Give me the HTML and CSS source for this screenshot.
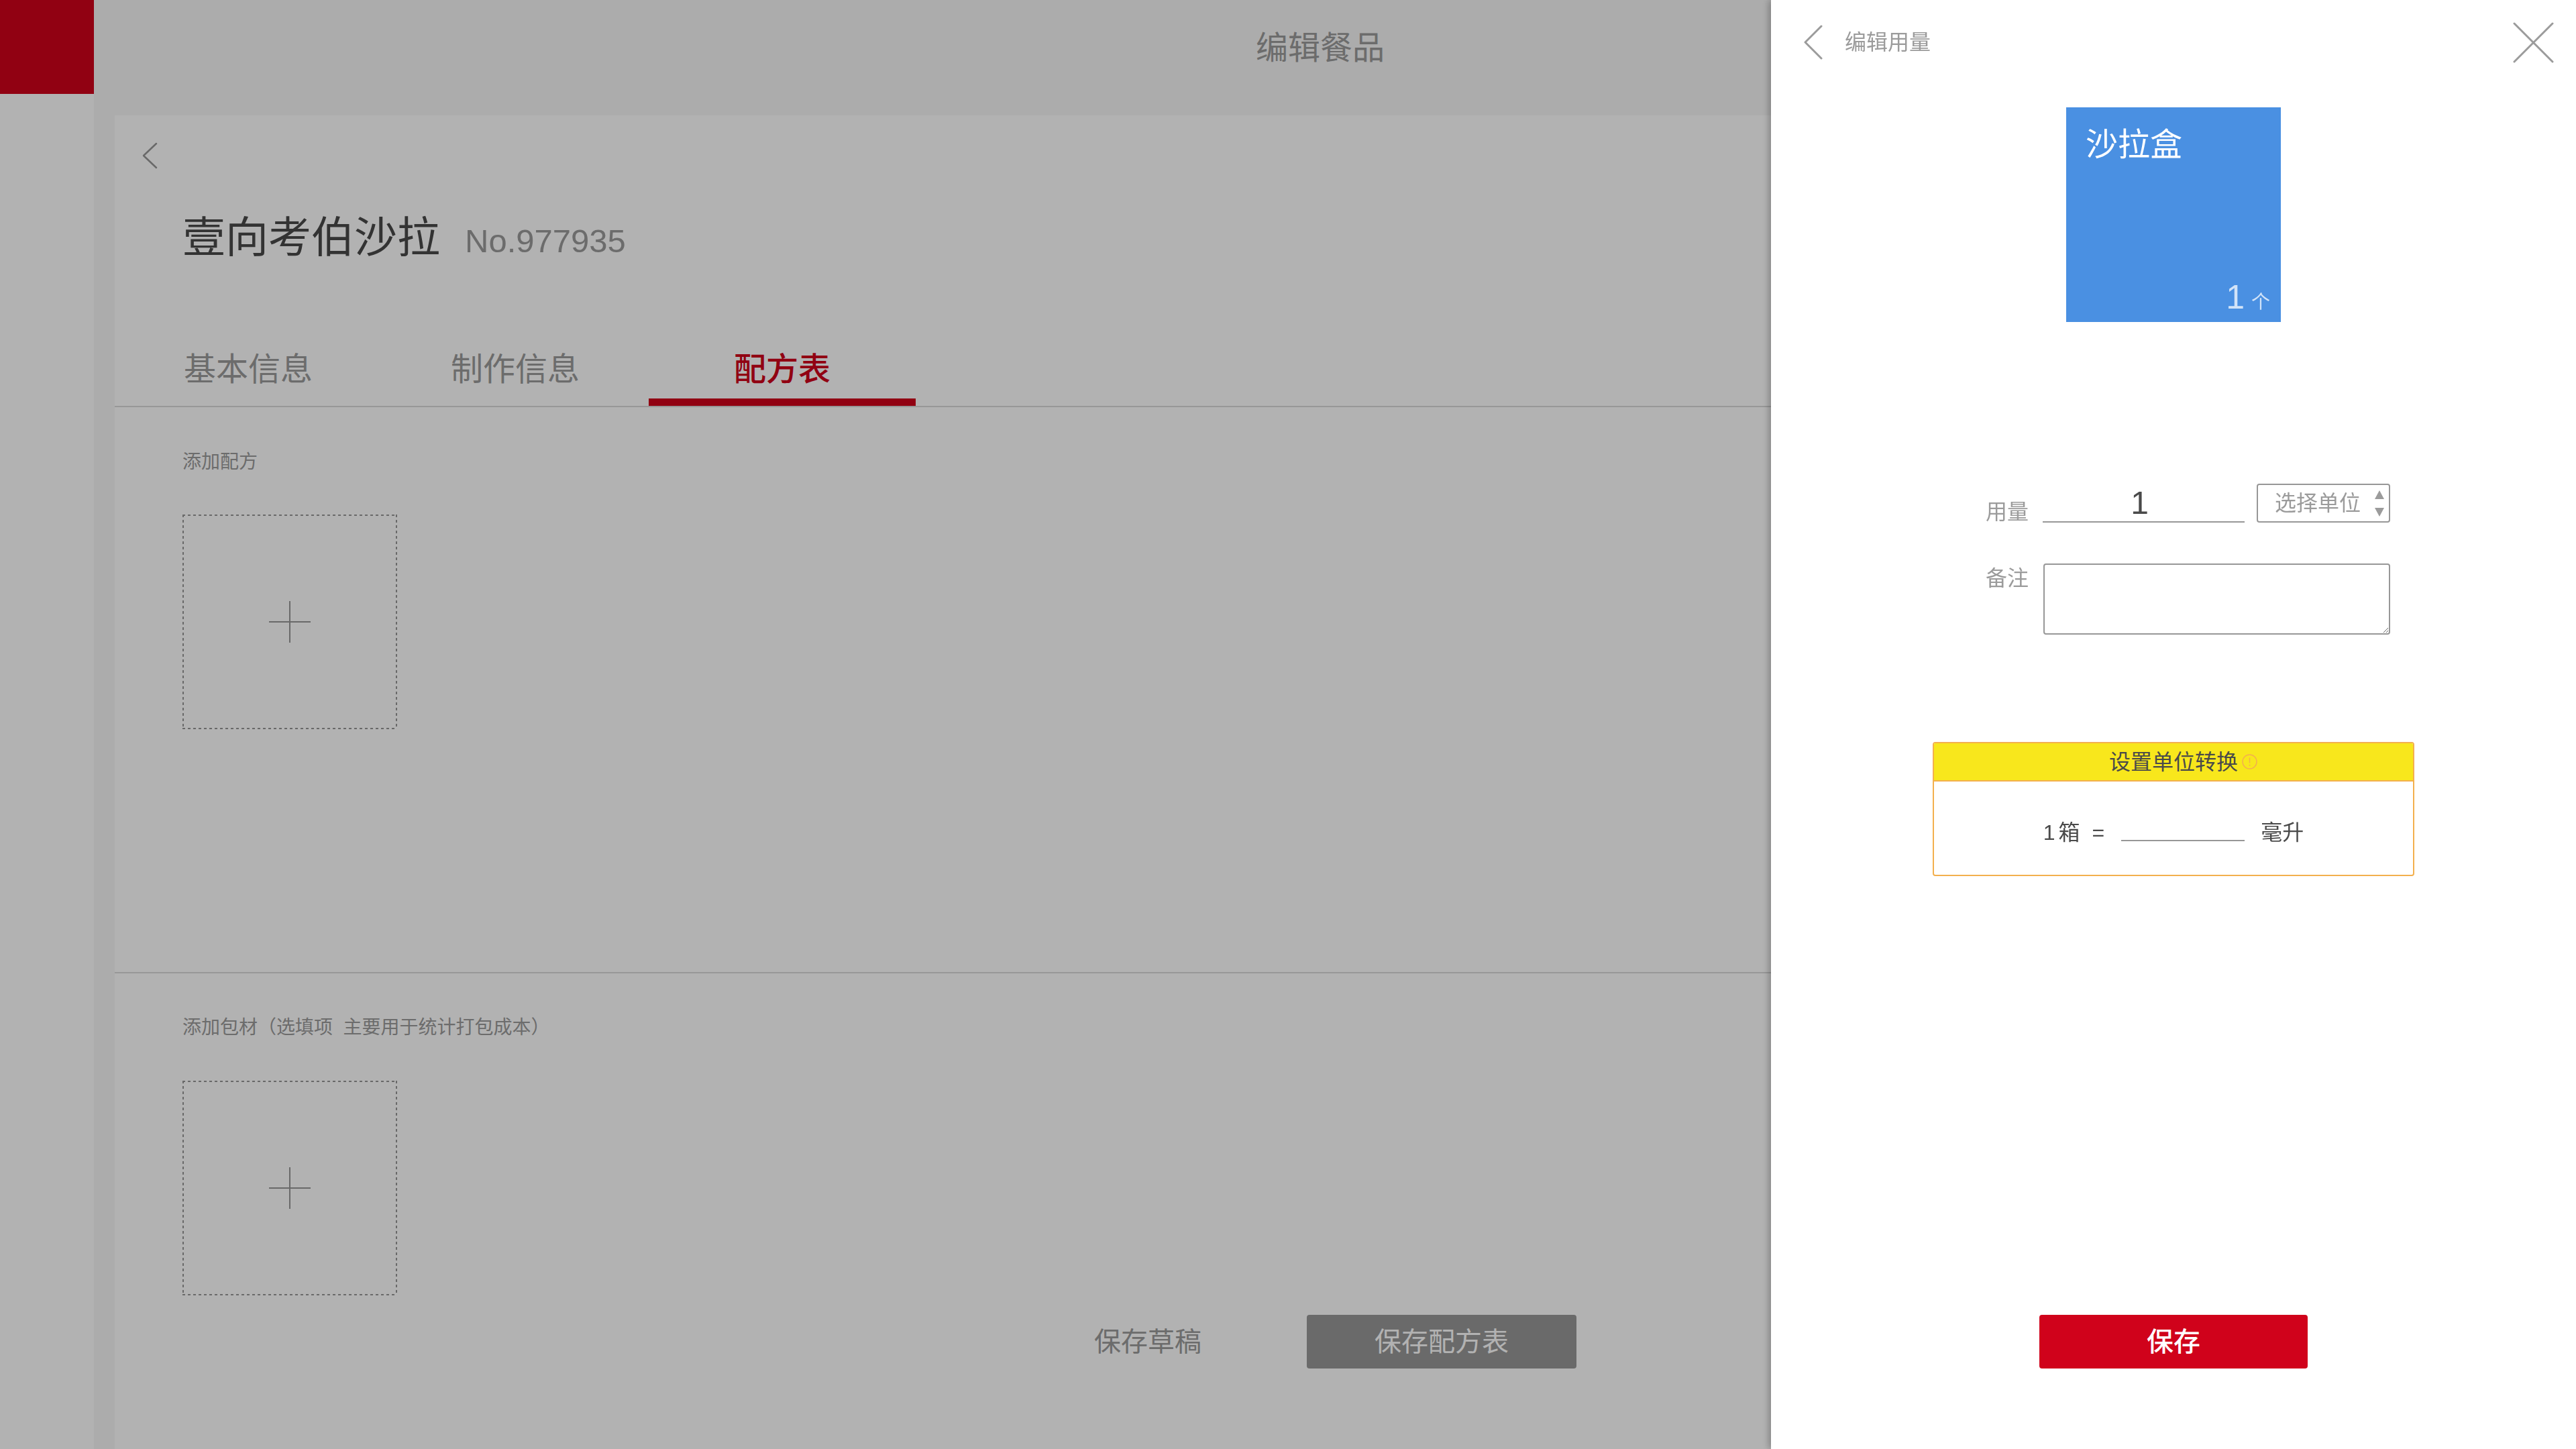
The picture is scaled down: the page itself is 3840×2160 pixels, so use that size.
FILE: index.html
```html
<!DOCTYPE html>
<html lang="zh-CN">
<head>
<meta charset="utf-8">
<title>编辑餐品</title>
<link rel="stylesheet" href="styles.css">
</head>
<body>
<div class="app">
  <aside class="sidebar"><div class="logo"></div></aside>
  <main class="main">
    <header class="topbar"><h1>编辑餐品</h1></header>
    <section class="card">
      <button class="back" aria-label="返回">
        <svg width="24" height="40" viewBox="0 0 24 40"><path d="M22 2 L3 20 L22 38" fill="none" stroke="#979797" stroke-width="2.5" stroke-linecap="round" stroke-linejoin="round"/></svg>
      </button>
      <div class="title-row">
        <h2>壹向考伯沙拉</h2>
        <span class="code">No.977935</span>
      </div>
      <nav class="tabs">
        <div class="tab">基本信息</div>
        <div class="tab">制作信息</div>
        <div class="tab active">配方表</div>
      </nav>
      <div class="section recipe">
        <div class="section-label">添加配方</div>
        <div class="add-box">
          <svg width="62" height="62" viewBox="0 0 62 62"><path d="M31 0 V62 M0 31 H62" stroke="#979797" stroke-width="2" fill="none"/></svg>
        </div>
      </div>
      <div class="section pack">
        <div class="section-label">添加包材（选填项  主要用于统计打包成本）</div>
        <div class="add-box">
          <svg width="62" height="62" viewBox="0 0 62 62"><path d="M31 0 V62 M0 31 H62" stroke="#979797" stroke-width="2" fill="none"/></svg>
        </div>
      </div>
      <div class="actions">
        <button class="draft">保存草稿</button>
        <button class="save-recipe">保存配方表</button>
      </div>
    </section>
  </main>
</div>

<div class="mask"></div>

<aside class="drawer">
  <div class="drawer-head">
    <button class="drawer-back" aria-label="返回">
      <svg width="29" height="52" viewBox="0 0 29 52"><path d="M27 2 L3 26 L27 50" fill="none" stroke="#9b9b9b" stroke-width="3" stroke-linecap="round" stroke-linejoin="round"/></svg>
    </button>
    <span class="drawer-title">编辑用量</span>
    <button class="drawer-close" aria-label="关闭">
      <svg width="61" height="61" viewBox="0 0 61 61"><path d="M2 2 L59 59 M59 2 L2 59" fill="none" stroke="#9b9b9b" stroke-width="3" stroke-linecap="round"/></svg>
    </button>
  </div>

  <div class="item-card">
    <div class="item-name">沙拉盒</div>
    <div class="item-count">1<small>个</small></div>
  </div>

  <div class="form">
    <div class="form-row">
      <span class="form-label">用量</span>
      <input class="qty-input" type="text" value="1">
      <div class="unit-select">
        <span>选择单位</span>
        <svg width="14" height="39" viewBox="0 0 14 39"><path d="M0 13 L7 0 L14 13 Z M0 26 L14 26 L7 39 Z" fill="#9b9b9b"/></svg>
      </div>
    </div>
    <div class="form-row top">
      <span class="form-label">备注</span>
      <textarea class="note"></textarea>
    </div>
  </div>

  <div class="convert">
    <div class="convert-head">
      <span>设置单位转换</span>
      <svg class="info-icon" width="23" height="23" viewBox="0 0 23 23"><circle cx="11.5" cy="11.5" r="10.5" fill="none" stroke="#f3b04e" stroke-width="1.5"/><path d="M11.5 5.5 V13.5" stroke="#f3b04e" stroke-width="1.5"/><circle cx="11.5" cy="16.8" r="1" fill="#f3b04e"/></svg>
    </div>
    <div class="convert-body">
      <span class="conv-from"><span class="num">1</span>箱</span>
      <span class="eq">=</span>
      <span class="blank"></span>
      <span class="conv-to">毫升</span>
    </div>
  </div>

  <button class="drawer-save">保存</button>
</aside>
</body>
</html>
```

FILE: styles.css
```css
html, body {
  margin: 0;
  padding: 0;
}

body {
  width: 3840px;
  height: 2160px;
  overflow: hidden;
  font-family: "Liberation Sans", "Noto Sans CJK SC", sans-serif;
  background: #fff;
}

button {
  border: 0;
  background: none;
  padding: 0;
  margin: 0;
  font: inherit;
  cursor: pointer;
}

/* ---------- base page ---------- */
.app {
  display: flex;
  height: 2160px;
}

.sidebar {
  width: 140px;
  flex: none;
  background: #fff;
}

.logo {
  height: 140px;
  background: #d0021b;
}

.main {
  flex: 1;
  min-width: 0;
  display: flex;
  flex-direction: column;
  background: #f6f6f6;
}

.topbar {
  height: 172px;
  flex: none;
  box-sizing: border-box;
  padding: 48px 44px 0 0;
  text-align: center;
}

.topbar h1 {
  margin: 0;
  font-size: 48px;
  line-height: 48px;
  font-weight: normal;
  color: #9b9b9b;
}

.card {
  flex: 1;
  margin-left: 31px;
  background: #fff;
  display: flex;
  flex-direction: column;
  padding-top: 40px;
}

.back {
  display: block;
  width: 24px;
  height: 40px;
  margin-left: 40px;
}

.back svg {
  display: block;
}

.title-row {
  display: flex;
  align-items: baseline;
  margin-top: 70px;
  padding-left: 101px;
}

.title-row h2 {
  margin: 0;
  font-size: 64px;
  line-height: 64px;
  font-weight: normal;
  color: #4a4a4a;
}

.code {
  margin-left: 37px;
  font-size: 49px;
  line-height: 49px;
  color: #9b9b9b;
}

.tabs {
  display: flex;
  margin-top: 141px;
  border-bottom: 2px solid #d8d8d8;
}

.tab {
  width: 398px;
  text-align: center;
  font-size: 48px;
  line-height: 48px;
  padding-bottom: 19px;
  border-bottom: 11px solid transparent;
  color: #9b9b9b;
}

.tab.active {
  color: #d0021b;
  border-bottom-color: #d0021b;
  font-weight: 500;
}

.section {
  padding-left: 101px;
}

.recipe {
  padding-top: 68px;
  padding-bottom: 362px;
  border-bottom: 2px solid #d8d8d8;
}

.pack {
  padding-top: 67px;
}

.section-label {
  font-size: 28px;
  line-height: 28px;
  color: #9b9b9b;
  white-space: pre;
}

.add-box {
  width: 320px;
  height: 320px;
  margin-top: 64px;
  display: flex;
  align-items: center;
  justify-content: center;
  background:
    repeating-linear-gradient(to right, #979797 0 4px, transparent 4px 8px) top left / 100% 2px no-repeat,
    repeating-linear-gradient(to right, #979797 0 4px, transparent 4px 8px) bottom left / 100% 2px no-repeat,
    repeating-linear-gradient(to bottom, #979797 0 4px, transparent 4px 8px) top left / 2px 100% no-repeat,
    repeating-linear-gradient(to bottom, #979797 0 4px, transparent 4px 8px) top right / 2px 100% no-repeat;
}

.pack .add-box {
  margin-top: 65px;
}

.actions {
  display: flex;
  gap: 36px;
  padding-left: 1339px;
  margin-top: 29px;
}

.actions button {
  width: 402px;
  height: 80px;
  font-size: 40px;
  line-height: 40px;
  border-radius: 4px;
}

.draft {
  color: #9b9b9b;
}

.save-recipe {
  background: #999;
  color: #fff;
}

/* ---------- mask ---------- */
.mask {
  position: fixed;
  inset: 0;
  background: rgba(0, 0, 0, 0.3);
}

/* ---------- drawer ---------- */
.drawer {
  position: fixed;
  top: 0;
  right: 0;
  width: 1200px;
  height: 2160px;
  background: #fff;
  box-shadow: -3px 0 10px rgba(0, 0, 0, 0.28);
  display: flex;
  flex-direction: column;
}

.drawer-head {
  height: 126px;
  flex: none;
  display: flex;
  align-items: center;
  padding: 0 33px 0 48px;
}

.drawer-back,
.drawer-close {
  display: flex;
}

.drawer-title {
  margin-left: 33px;
  font-size: 32px;
  line-height: 32px;
  color: #9b9b9b;
}

.drawer-close {
  margin-left: auto;
}

.item-card {
  align-self: center;
  width: 320px;
  height: 320px;
  margin-top: 34px;
  box-sizing: border-box;
  padding: 32px 16px 12px 29px;
  background: #4a90e2;
  color: #fff;
  display: flex;
  flex-direction: column;
}

.item-name {
  font-size: 48px;
  line-height: 48px;
}

.item-count {
  margin-top: auto;
  align-self: flex-end;
  font-size: 50px;
  line-height: 50px;
  color: rgba(255, 255, 255, 0.75);
}

.item-count small {
  font-size: 28px;
  line-height: 28px;
  margin-left: 10px;
}

.form {
  margin-top: 241px;
  padding-left: 320px;
  display: flex;
  flex-direction: column;
  gap: 61px;
}

.form-row {
  display: flex;
  align-items: flex-end;
}

.form-row.top {
  align-items: flex-start;
}

.form-label {
  flex: none;
  width: 64px;
  font-size: 32px;
  line-height: 32px;
  color: #9b9b9b;
}

.form-row.top .form-label {
  margin-top: 6px;
}

.qty-input {
  margin-left: 21px;
  width: 301px;
  height: 58px;
  box-sizing: border-box;
  padding: 0 12px 0 0;
  border: 0;
  border-bottom: 2px solid #979797;
  border-radius: 0;
  outline: none;
  background: transparent;
  font-family: inherit;
  font-size: 48px;
  color: #4a4a4a;
  text-align: center;
}

.unit-select {
  margin-left: 18px;
  width: 199px;
  height: 58px;
  box-sizing: border-box;
  border: 2px solid #979797;
  border-radius: 4px;
  padding: 0 7px 0 25px;
  display: flex;
  align-items: center;
  font-size: 32px;
  line-height: 32px;
  color: #9b9b9b;
}

.unit-select svg {
  margin-left: auto;
}

.note {
  margin: 0 0 0 22px;
  width: 517px;
  height: 106px;
  box-sizing: border-box;
  border: 2px solid #979797;
  border-radius: 4px;
  padding: 8px;
  font-family: inherit;
  font-size: 28px;
  outline: none;
}

.convert {
  align-self: center;
  width: 718px;
  height: 200px;
  margin-top: 160px;
  box-sizing: border-box;
  border: 2px solid #f3b04e;
  border-radius: 4px;
  overflow: hidden;
  display: flex;
  flex-direction: column;
}

.convert-head {
  height: 57px;
  flex: none;
  box-sizing: border-box;
  border-bottom: 2px solid #f3b04e;
  background: #f8e71c;
  display: flex;
  align-items: center;
  justify-content: center;
  font-size: 32px;
  line-height: 32px;
  color: #4a4a4a;
}

.info-icon {
  margin-left: 6px;
  margin-right: -29px;
}

.convert-body {
  flex: 1;
  display: flex;
  justify-content: center;
  align-items: flex-start;
  padding-top: 60px;
  font-size: 32px;
  line-height: 32px;
  color: #4a4a4a;
}

.num {
  margin-right: 5px;
}

.eq {
  margin-left: 18px;
}

.blank {
  width: 184px;
  height: 29px;
  box-sizing: border-box;
  margin-left: 25px;
  border-bottom: 2px solid #979797;
}

.conv-to {
  margin-left: 24px;
}

.drawer-save {
  align-self: center;
  width: 400px;
  height: 80px;
  margin-top: auto;
  margin-bottom: 120px;
  border-radius: 4px;
  background: #d0021b;
  color: #fff;
  font-size: 40px;
  line-height: 40px;
  font-weight: 500;
}
```
